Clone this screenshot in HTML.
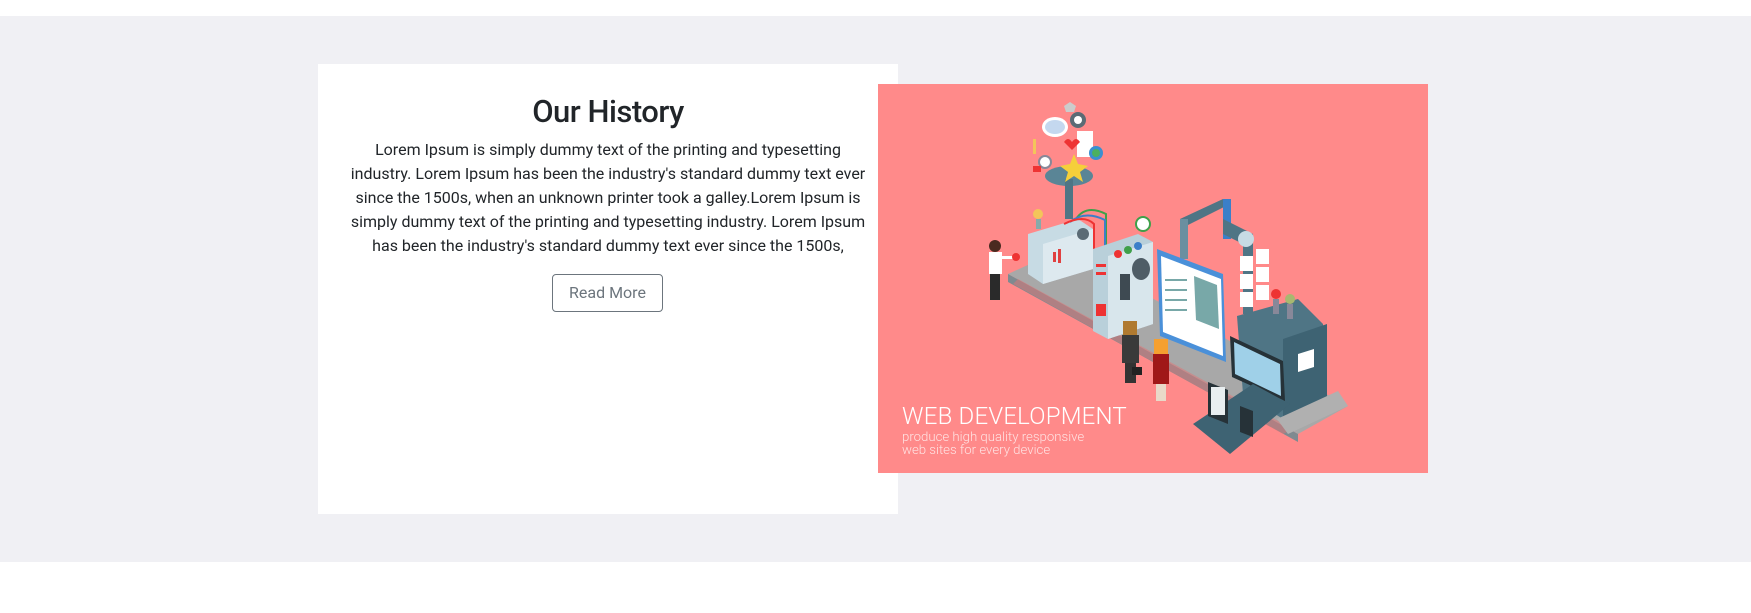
<!DOCTYPE html>
<html><head><meta charset="utf-8"><style>
*{margin:0;padding:0;box-sizing:border-box}
body{width:1751px;height:613px;background:#fff;position:relative;overflow:hidden;font-family:"Roboto","Liberation Sans",sans-serif}
.band{position:absolute;left:0;top:16px;width:1751px;height:546px;background:#f0f0f4}
.card{position:absolute;left:318px;top:64px;width:580px;height:450px;background:#fff;text-align:center}
h2{position:absolute;left:0;width:100%;top:28px;font-size:31px;font-weight:500;color:#212529;line-height:40px;letter-spacing:-0.5px}
p{position:absolute;left:29px;width:522px;top:74px;font-size:16px;line-height:24px;color:#212529}
.btn{position:absolute;left:234px;top:210px;width:111px;height:38px;border:1px solid #6c757d;border-radius:4px;color:#6c757d;font-size:16px;line-height:36px}
.pink{position:absolute;left:878px;top:84px;width:550px;height:389px;background:#ff8a8a;overflow:hidden}
.t1{position:absolute;left:24px;top:319px;color:#fff;font-size:24px;font-weight:300;letter-spacing:0.2px;line-height:26px;white-space:nowrap}
.t2{position:absolute;left:24px;top:347px;color:#ffe3e3;font-size:13.2px;line-height:13px;white-space:nowrap;font-weight:300}
</style></head><body>
<div class="band"></div>
<div class="card">
<h2>Our History</h2>
<p>Lorem Ipsum is simply dummy text of the printing and typesetting industry. Lorem Ipsum has been the industry's standard dummy text ever since the 1500s, when an unknown printer took a galley.Lorem Ipsum is simply dummy text of the printing and typesetting industry. Lorem Ipsum has been the industry's standard dummy text ever since the 1500s,</p>
<div class="btn">Read More</div>
</div>
<div class="pink">
<svg width="550" height="389" viewBox="0 0 550 389" style="position:absolute;left:0;top:0">
<polygon points="130,190 185,165 470,322 420,350" fill="#a8a8a8"/>
<polygon points="130,190 420,350 420,358 130,198" fill="#7f8a90"/>
<polygon points="140,195 415,345 405,350 135,200" fill="#e07575" opacity=".5"/>
<polygon points="150,150 200,135 215,145 215,185 165,200 150,190" fill="#c7dbe4"/>
<polygon points="165,160 215,145 215,185 165,200" fill="#dde9ef"/>
<rect x="175" y="168" width="3" height="10" fill="#e04040"/><rect x="180" y="165" width="3" height="14" fill="#e04040"/>
<circle cx="205" cy="150" r="6" fill="#5b6b75"/>
<circle cx="160" cy="130" r="5" fill="#f3c55a"/><rect x="158" y="135" width="5" height="10" fill="#8aa"/>
<ellipse cx="191" cy="92" rx="24" ry="10" fill="#5a8596"/>
<rect x="187" y="95" width="8" height="40" fill="#4f7585"/>
<polygon points="196,70 200,80 210,82 202,88 205,98 196,92 187,98 190,88 182,82 192,80" fill="#f5cf3a"/>
<path d="M198 135 q10 -15 30 -5 l0 35" stroke="#3fa04a" stroke-width="2" fill="none"/>
<path d="M192 138 q15 -12 35 -2 l0 30" stroke="#3b7fc9" stroke-width="2" fill="none"/>
<path d="M186 140 q20 -10 30 0 l0 30" stroke="#e33" stroke-width="2" fill="none"/>
<ellipse cx="177" cy="43" rx="13" ry="10" fill="#fff"/><ellipse cx="177" cy="43" rx="10" ry="7" fill="#3b7fc9" opacity=".3"/>
<circle cx="200" cy="36" r="8" fill="#5b6b75"/><circle cx="200" cy="36" r="4" fill="#fff"/>
<rect x="199" y="47" width="16" height="26" fill="#fff"/>
<circle cx="218" cy="69" r="7" fill="#3b8fd0"/><circle cx="218" cy="69" r="4" fill="#4bb060"/>
<rect x="155" y="55" width="3" height="15" fill="#f3c55a"/>
<circle cx="167" cy="78" r="6" fill="#fff" stroke="#889" stroke-width="2"/>
<rect x="155" y="82" width="8" height="6" fill="#e33"/>
<path d="M186 22 l6 -4 6 4 -2 6 -8 0z" fill="#ccc"/>
<path d="M186 58 q4 -6 8 0 q4 -6 8 0 l-8 8z" fill="#e33"/>
<polygon points="215,165 260,150 275,158 275,240 230,255 215,247" fill="#b9d0da"/>
<polygon points="230,172 275,158 275,240 230,255" fill="#d8e6ec"/>
<rect x="218" y="180" width="10" height="3" fill="#e33"/><rect x="218" y="188" width="10" height="3" fill="#e33"/><rect x="218" y="220" width="10" height="12" fill="#e33"/>
<ellipse cx="263" cy="185" rx="9" ry="11" fill="#4f5d66"/>
<rect x="242" y="190" width="10" height="26" fill="#3e4a52"/>
<circle cx="240" cy="170" r="4" fill="#e33"/><circle cx="250" cy="166" r="4" fill="#3fa04a"/><circle cx="260" cy="162" r="4" fill="#3b7fc9"/>
<circle cx="265" cy="140" r="7" fill="#fff" stroke="#3fa04a" stroke-width="2"/>
<polygon points="302,135 345,115 352,120 308,142" fill="#4f7585"/>
<rect x="302" y="135" width="8" height="40" fill="#6a8fa0"/>
<rect x="345" y="115" width="8" height="40" fill="#3b7fc9"/>
<polygon points="345,135 375,150 375,230 365,230 365,160 345,150" fill="#4f7585"/>
<circle cx="368" cy="155" r="8" fill="#c7dbe4"/>
<rect x="378" y="165" width="13" height="15" fill="#fff"/><rect x="378" y="183" width="13" height="15" fill="#fff"/><rect x="378" y="201" width="13" height="15" fill="#fff"/>
<rect x="362" y="172" width="13" height="15" fill="#fff"/><rect x="362" y="190" width="13" height="15" fill="#fff"/><rect x="362" y="208" width="13" height="15" fill="#fff"/>
<polygon points="279,165 345,190 348,278 282,252" fill="#4a90d9"/>
<polygon points="283,172 343,195 345,272 285,248" fill="#fff"/>
<polygon points="316,192 339,201 341,245 318,236" fill="#78a8a8"/>
<rect x="287" y="195" width="22" height="2" fill="#78a8a8"/><rect x="287" y="205" width="22" height="2" fill="#78a8a8"/><rect x="287" y="215" width="22" height="2" fill="#78a8a8"/><rect x="287" y="225" width="22" height="2" fill="#78a8a8"/>
<polygon points="359,232 420,215 445,240 449,315 405,335 365,310" fill="#4f7585"/>
<polygon points="405,255 449,240 449,315 405,335" fill="#3e6373"/>
<polygon points="420,270 436,265 436,283 420,288" fill="#fff"/>
<circle cx="398" cy="210" r="5" fill="#e33"/><circle cx="412" cy="215" r="5" fill="#a8b870"/>
<rect x="395" y="215" width="6" height="15" fill="#889"/><rect x="409" y="220" width="6" height="15" fill="#889"/>
<polygon points="399,335 460,307 470,322 410,350" fill="#b0b0b0"/>
<polygon points="352,252 405,277 407,317 354,293" fill="#263238"/>
<polygon points="356,258 402,280 403,312 357,290" fill="#9fd0e8"/>
<polygon points="315,340 375,300 412,320 352,370" fill="#3e6373"/>
<polygon points="330,298 350,306 350,340 330,332" fill="#263238"/><rect x="333" y="303" width="14" height="28" fill="#e8eef0"/>
<polygon points="362,322 375,327 375,353 362,348" fill="#263238"/>
<circle cx="117" cy="162" r="6" fill="#4a2a20"/><rect x="111" y="168" width="13" height="22" fill="#fff"/><rect x="112" y="190" width="10" height="26" fill="#2a2a2a"/>
<rect x="124" y="172" width="12" height="3" fill="#fff"/><circle cx="138" cy="173" r="4" fill="#e33"/>
<rect x="245" y="237" width="14" height="14" fill="#b07a30"/><rect x="244" y="251" width="17" height="28" fill="#3a3a3a"/><rect x="247" y="279" width="11" height="20" fill="#333"/><rect x="254" y="283" width="10" height="8" fill="#222"/>
<rect x="276" y="255" width="14" height="16" fill="#f5a030"/><rect x="275" y="270" width="16" height="30" fill="#a01818"/><rect x="278" y="300" width="10" height="17" fill="#e9d9c8"/>
</svg>
<div class="t1">WEB DEVELOPMENT</div>
<div class="t2">produce high quality responsive<br>web sites for every device</div>
</div>
</body></html>
